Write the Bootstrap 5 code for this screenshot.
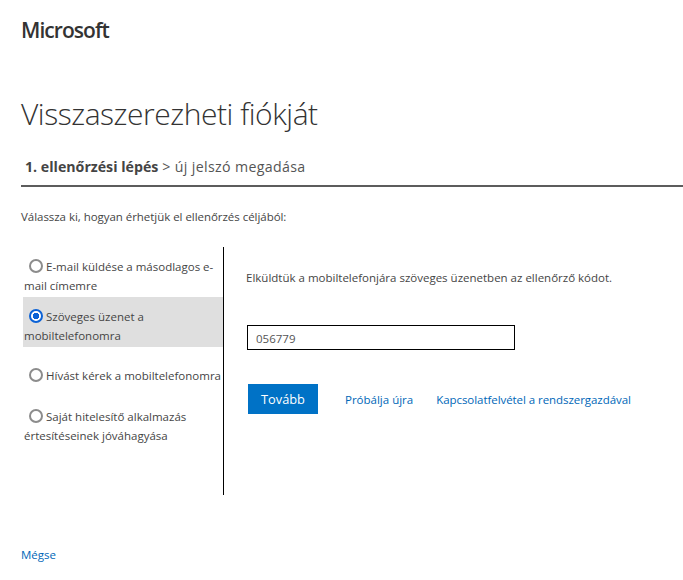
<!DOCTYPE html>
<html lang="hu">
<head>
<meta charset="utf-8">
<title>Visszaszerezheti fiókját</title>
<link href="https://cdn.jsdelivr.net/npm/bootstrap@5.3.0/dist/css/bootstrap.min.css" rel="stylesheet">
<style>
html, body { height: 100%; }
body { font-family: "Open Sans", "Noto Sans", sans-serif; color: #454545; background: #fff; font-size: 11.5px; overflow: hidden; }
.pg { padding: 18px 0 0 21px; }
.ms-logo { font-size: 21px; font-weight: 600; line-height: 24px; letter-spacing: -.95px; color: #333; }
.ttl { font-size: 30px; font-weight: 300; line-height: 44px; margin: 50px 0 0; color: #333; letter-spacing: -.45px; }
.stepline { font-size: 14.2px; line-height: 20px; color: #555; padding: 21px 0 8px 4px; border-bottom: 2px solid #5c5c5c; letter-spacing: .34px; }
.stepline b { font-weight: 700; color: #444; letter-spacing: 0; }
.lead-in { line-height: 16px; margin: 22px 0 0; letter-spacing: -.04px; }
.split { margin-top: 22px; height: 248px; }
.opts { width: 203px; flex: none; border-right: 1px solid #000; padding: 10px 0 0 2px; }
.opt { display: block; line-height: 19px; margin: 0; color: #454545; padding: 0 0 0 1px; }
.opt input { appearance: none; -webkit-appearance: none; width: 14px; height: 14px; border: 2px solid #8c8c8c; border-radius: 50%; background: #fff; margin: 0 3px 0 5px; vertical-align: -2px; }
.opt input:checked { border-color: #0b62d6; background: radial-gradient(circle, #0b62d6 0 3px, #fff 3.5px); }
.opt-on { background: #dfdfdf; padding: 10px 0 2px 1px; height: 50px; }
.o1 { height: 40px; }
.o3 { margin-top: 19px; height: 41px; white-space: nowrap; }
.o4 { height: 38px; }
.pane { padding: 15px 0 0 23px; }
.pane p { line-height: 32px; margin: 0 0 0 -1px; }
.code { display: block; width: 268px; height: 25px; border: 1px solid #000; border-radius: 0; padding: 1px 8px 0; font-size: 11.5px; color: #555; margin-top: 31px; font-family: inherit; }
.acts { margin-top: 34px; padding-left: 1px; gap: 27px; }
.go { background: #0072c6; color: #fff; border: 0; border-radius: 0; width: 70px; height: 30px; padding: 1px 0 0; font-size: 12.8px; }
.acts a, .back { color: #0067b8; text-decoration: none; }
.acts a { padding-top: 2px; }
.acts a + a { margin-left: -4px; letter-spacing: -.06px; }
.back { display: inline-block; margin-top: 51px; }
</style>
</head>
<body>
<div class="pg">
  <div class="ms-logo">Microsoft</div>
  <h1 class="ttl">Visszaszerezheti fiókját</h1>
  <div class="stepline"><b>1. ellenőrzési lépés</b> &gt; új jelszó megadása</div>
  <p class="lead-in">Válassza ki, hogyan érhetjük el ellenőrzés céljából:</p>
  <div class="split d-flex">
    <div class="opts">
      <label class="opt o1"><input type="radio" name="m">E-mail küldése a másodlagos e-mail címemre</label>
      <label class="opt opt-on"><input type="radio" name="m" checked>Szöveges üzenet a mobiltelefonomra</label>
      <label class="opt o3"><input type="radio" name="m">Hívást kérek a mobiltelefonomra</label>
      <label class="opt o4"><input type="radio" name="m">Saját hitelesítő alkalmazás értesítéseinek jóváhagyása</label>
    </div>
    <div class="pane">
      <p>Elküldtük a mobiltelefonjára szöveges üzenetben az ellenőrző kódot.</p>
      <input class="code" type="text" value="056779" aria-label="Kód">
      <div class="acts d-flex align-items-center">
        <button class="btn go" type="button">Tovább</button>
        <a href="#">Próbálja újra</a>
        <a href="#">Kapcsolatfelvétel a rendszergazdával</a>
      </div>
    </div>
  </div>
  <a class="back" href="#">Mégse</a>
</div>
<script src="https://cdn.jsdelivr.net/npm/bootstrap@5.3.0/dist/js/bootstrap.bundle.min.js"></script>
</body>
</html>
